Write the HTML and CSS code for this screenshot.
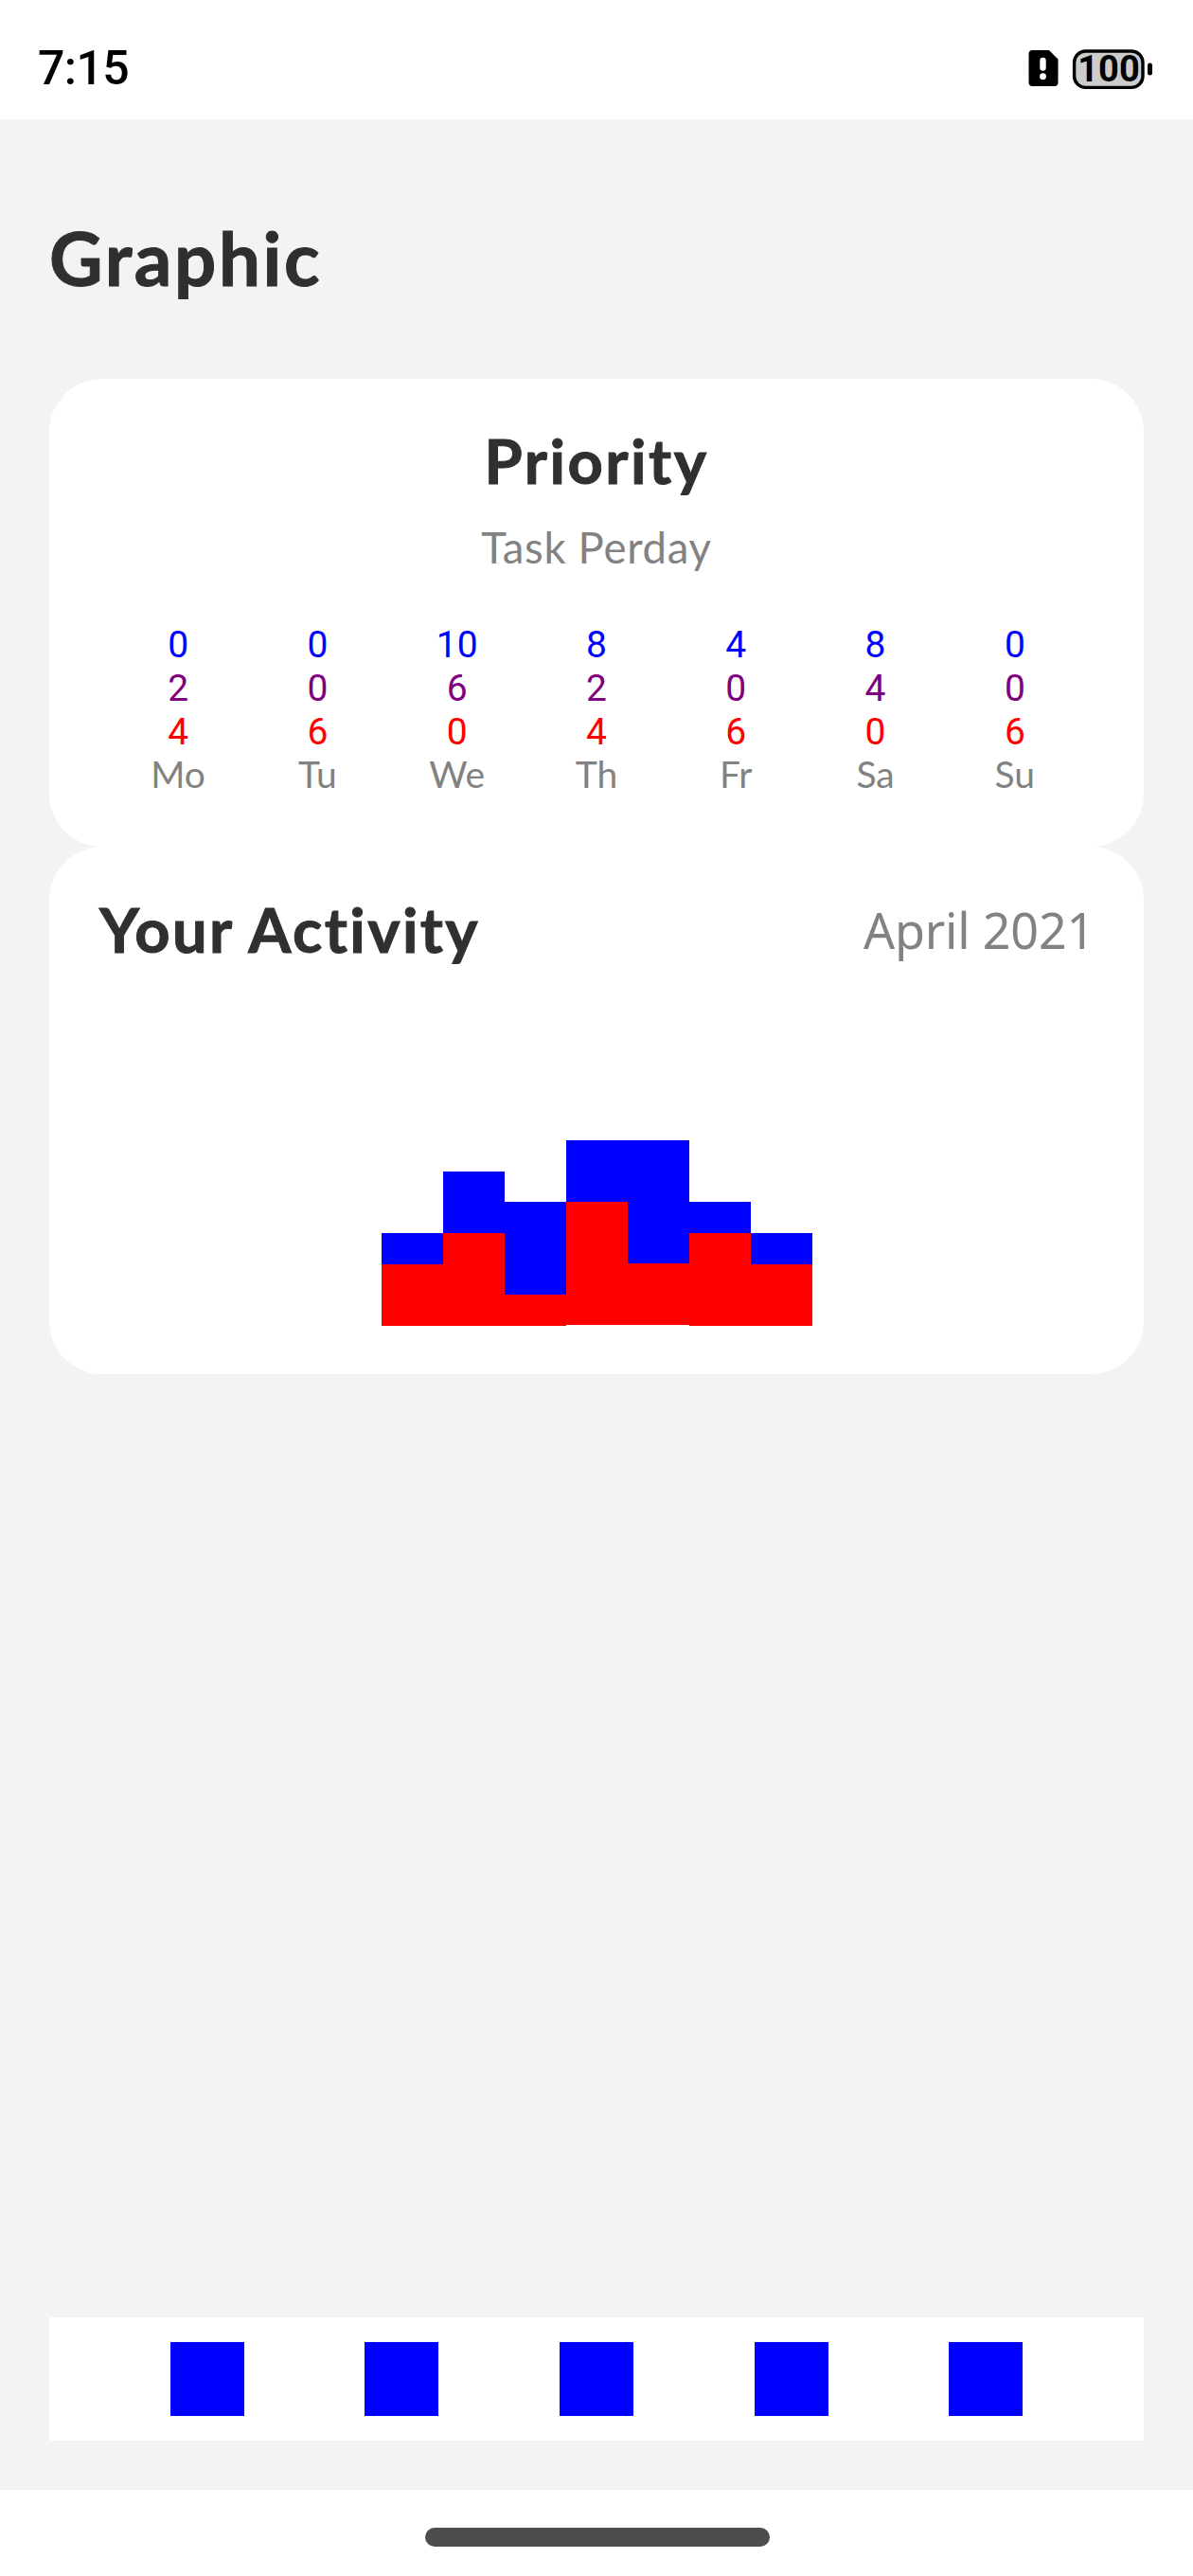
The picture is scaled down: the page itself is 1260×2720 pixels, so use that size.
FILE: index.html
```
<!DOCTYPE html>
<html lang="en">
<head>
<meta charset="utf-8">
<title>Graphic</title>
<link rel="stylesheet" href="styles.css">
</head>
<body>
<header class="status">
  <span class="clock">7:15</span>
  <svg class="status-icons" width="136" height="48" viewBox="0 0 136 48" role="img" aria-label="No SIM, battery 100">
    <path d="M8.500 3H26L35.500 12.500V37a4 4 0 0 1-4 4H8.500a4 4 0 0 1-4-4V7a4 4 0 0 1 4-4z" fill="#000"/>
    <rect x="16.300" y="10.700" width="6.400" height="14" rx="3.200" fill="#fff"/>
    <circle cx="19.500" cy="30.700" r="3.400" fill="#fff"/>
    <rect x="52.600" y="4" width="72.400" height="38.400" rx="12" fill="#ccc" stroke="#000" stroke-width="3.400"/>
    <rect x="130" y="16.500" width="5" height="13" rx="2.500" fill="#000"/>
    <text class="level" x="89" y="35.500" text-anchor="middle">100</text>
  </svg>
</header>

<main class="page">
  <h1 class="title">Graphic</h1>

  <section class="card priority">
    <h2 class="heading">Priority</h2>
    <p class="subtitle">Task Perday</p>
    <div class="week">
      <div class="day"><span class="low">0</span><span class="mid">2</span><span class="high">4</span><span class="name">Mo</span></div>
      <div class="day"><span class="low">0</span><span class="mid">0</span><span class="high">6</span><span class="name">Tu</span></div>
      <div class="day"><span class="low">10</span><span class="mid">6</span><span class="high">0</span><span class="name">We</span></div>
      <div class="day"><span class="low">8</span><span class="mid">2</span><span class="high">4</span><span class="name">Th</span></div>
      <div class="day"><span class="low">4</span><span class="mid">0</span><span class="high">6</span><span class="name">Fr</span></div>
      <div class="day"><span class="low">8</span><span class="mid">4</span><span class="high">0</span><span class="name">Sa</span></div>
      <div class="day"><span class="low">0</span><span class="mid">0</span><span class="high">6</span><span class="name">Su</span></div>
    </div>
  </section>

  <section class="card activity">
    <div class="activity-head">
      <h2 class="heading wide">Your Activity</h2>
      <span class="month">April 2021</span>
    </div>
    <div class="chart">
      <div class="bar"><i class="blue" style="height:33px"></i><i class="red" style="height:65px"></i></div>
      <div class="bar"><i class="blue" style="height:65px"></i><i class="red" style="height:98px"></i></div>
      <div class="bar"><i class="blue" style="height:98px"></i><i class="red" style="height:33px"></i></div>
      <div class="bar raised"><i class="blue" style="height:65px"></i><i class="red" style="height:130px"></i></div>
      <div class="bar raised"><i class="blue" style="height:130px"></i><i class="red" style="height:65px"></i></div>
      <div class="bar"><i class="blue" style="height:33px"></i><i class="red" style="height:98px"></i></div>
      <div class="bar"><i class="blue" style="height:33px"></i><i class="red" style="height:65px"></i></div>
    </div>
  </section>

  <nav class="tabs"><i class="tab"></i><i class="tab"></i><i class="tab"></i><i class="tab"></i><i class="tab"></i></nav>
</main>

<footer class="gesture"><i class="pill"></i></footer>
</body>
</html>
```
FILE: styles.css
```
* { box-sizing: border-box; }

body {
  margin: 0;
  width: 1260px;
  height: 2720px;
  display: flex;
  flex-direction: column;
  background: #fff;
  font-family: Lato, "Noto Sans", sans-serif;
  color: #303030;
}

h1, h2, p { margin: 0; }

.status {
  height: 126px;
  display: flex;
  justify-content: space-between;
  align-items: flex-start;
  padding: 39px 42px 0 40px;
  color: #000;
}
.clock {
  font: 500 50px/66px Roboto, sans-serif;
  letter-spacing: -0.6px;
}
.status-icons { margin-top: 11px; }
.level { font: 700 38px Roboto, sans-serif; }

.page {
  height: 2503px;
  display: flex;
  flex-direction: column;
  padding: 99px 52px 52px;
  background: #f1f3f5;
}
.title {
  margin-bottom: 81px;
  font-size: 78px;
  line-height: 94px;
  letter-spacing: 2.6px;
  color: #2e302f;
  -webkit-text-stroke: 1px #2e302f;
}

.card {
  background: #fff;
  border-radius: 56px;
}
.priority {
  height: 494px;
  display: flex;
  flex-direction: column;
  align-items: center;
  padding-top: 47px;
}
.heading {
  font-size: 65px;
  line-height: 78px;
  letter-spacing: 2.5px;
  -webkit-text-stroke: 1px #303030;
}
.heading.wide { margin-left: 1px; letter-spacing: 2.4px; }
.subtitle {
  margin: 25px 0 53px;
  font-size: 45.5px;
  line-height: 55px;
  letter-spacing: 0.7px;
  color: #828282;
}
.week {
  width: 1031px;
  display: grid;
  grid-template-columns: repeat(7, 1fr);
}
.day {
  display: flex;
  flex-direction: column;
  align-items: center;
  font: 39px/46px Roboto, sans-serif;
}
.low { color: #00f; }
.mid { color: #800080; }
.high { color: #f00; }
.name {
  font-family: Lato, sans-serif;
  line-height: 42px;
  color: #828282;
}

.activity {
  height: 557px;
  display: flex;
  flex-direction: column;
  align-items: center;
  justify-content: space-between;
  padding: 48px 52px 51px;
}
.activity-head {
  width: 100%;
  display: flex;
  justify-content: space-between;
  align-items: center;
}
.month {
  font: 52px/71px "Noto Sans", sans-serif;
  letter-spacing: -0.2px;
  color: #828282;
}
.chart {
  display: flex;
  align-items: flex-end;
}
.bar {
  width: 65px;
  display: flex;
  flex-direction: column;
}
.raised { margin-bottom: 1px; }
.blue { background: #00f; }
.red { background: #f00; }

.tabs {
  height: 130px;
  margin-top: auto;
  display: flex;
  align-items: center;
  justify-content: space-evenly;
  background: #fff;
}
.tab {
  width: 78px;
  height: 78px;
  background: #00f;
}

.gesture {
  flex: 1;
  display: flex;
  justify-content: center;
  padding: 40px 0 0 1px;
}
.pill {
  width: 364px;
  height: 20px;
  border-radius: 10px;
  background: #4d4d4d;
}
```
